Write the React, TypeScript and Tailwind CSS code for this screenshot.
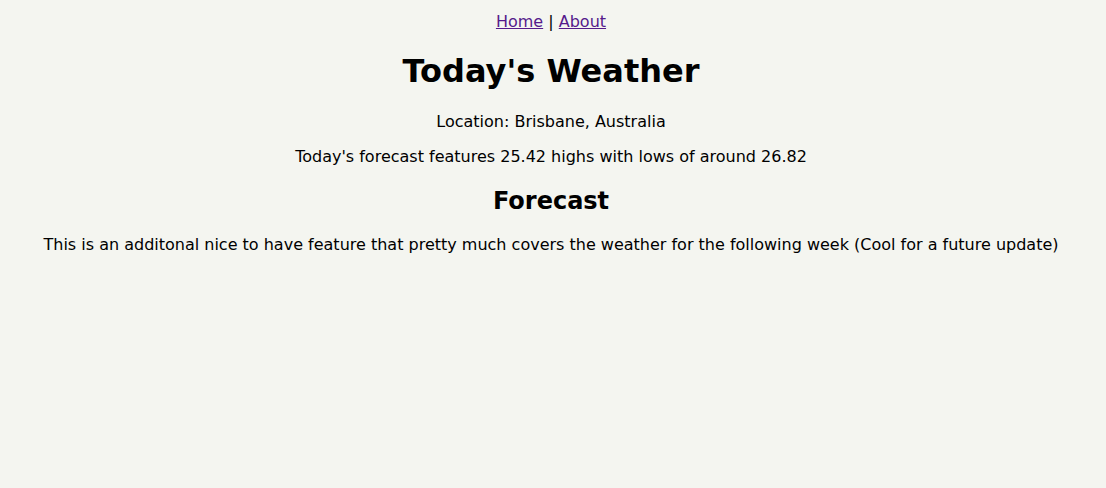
export default function App() {
  return (
    <div className="min-h-[488px] bg-[#f4f5f0] pr-1 text-black text-center font-['DejaVu_Sans',sans-serif] text-base">
      <nav className="pt-[10px] leading-6">
        <a href="#" className="underline text-[#551a8b]">
          Home
        </a>{" "}
        |{" "}
        <a href="#" className="underline text-[#551a8b]">
          About
        </a>
      </nav>
      <h1 className="mt-[17px] text-[32px] leading-10 font-bold">
        Today's Weather
      </h1>
      <p className="mt-[19px] leading-6">Location: Brisbane, Australia</p>
      <p className="mt-[11px] leading-6">
        Today's forecast features 25.42 highs with lows of around 26.82
      </p>
      <h2 className="mt-4 text-2xl leading-8 font-bold">Forecast</h2>
      <p className="mt-4 leading-6">
        This is an additonal nice to have feature that pretty much covers the
        weather for the following week (Cool for a future update)
      </p>
    </div>
  );
}
